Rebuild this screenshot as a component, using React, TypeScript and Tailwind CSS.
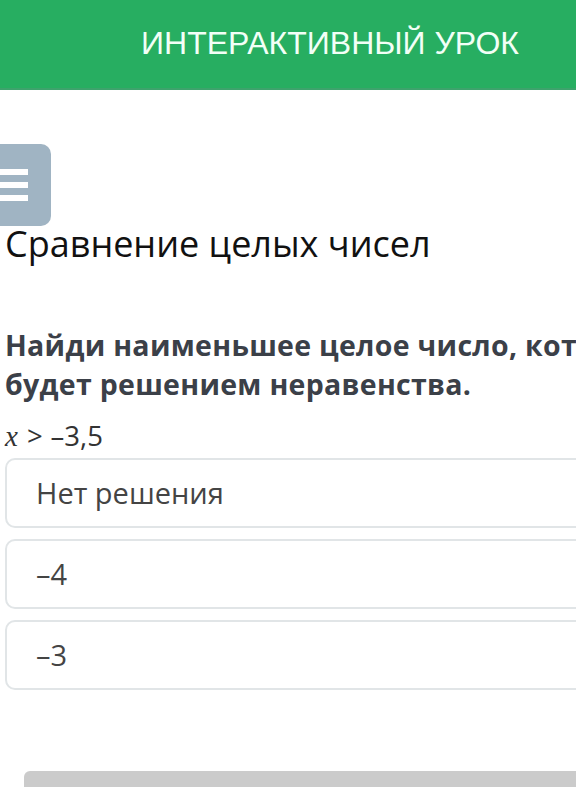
import React from 'react'

const options = ['Нет решения', '–4', '–3']

const MenuButton: React.FC = () => (
  <button
    type="button"
    className="flex h-[82px] w-[51px] flex-col justify-center gap-[7px] rounded-r-[10px] bg-[#a0b4c3]"
  >
    <span className="block h-[6px] w-[28px] bg-white" />
    <span className="block h-[6px] w-[28px] bg-white" />
    <span className="block h-[6px] w-[28px] bg-white" />
  </button>
)

export default function App() {
  return (
    <div className="h-[787px] w-[576px] overflow-hidden bg-white">
      <div className="w-[660px]">
        <header className="flex h-[90px] items-center justify-center border-b-2 border-[#3da36c] bg-[#27ae61] pb-[2px]">
          <h1 className="font-['Liberation_Sans',Arial,sans-serif] text-[32px] leading-none text-[#f2fff6]">
            ИНТЕРАКТИВНЫЙ УРОК
          </h1>
        </header>

        <div className="mt-[54px]">
          <MenuButton />
        </div>

        <div className="pl-[5px] font-['Open_Sans','Noto_Sans',sans-serif]">
          <h2 className="text-[36px] leading-[36px] text-[#111]">
            Сравнение целых чисел
          </h2>

          <p className="mt-[64px] text-[28.5px] font-bold leading-[39px] tracking-[0.3px] text-[#3b4048]">
            Найди наименьшее целое число, которое будет решением неравенства.
          </p>

          <div className="mt-[17px] flex items-baseline text-[27.5px] leading-[30px] text-[#333]">
            <span className="font-['Liberation_Serif',serif] text-[29px] italic">x</span>
            <span className="ml-[9px]">&gt;</span>
            <span className="ml-[8px]">–3,5</span>
          </div>

          <div className="mt-[7px] flex flex-col gap-[11px]">
            {options.map((option) => (
              <div
                key={option}
                className="flex h-[70px] items-center rounded-[10px] border-2 border-[#e1e5e7] pl-[29px] text-[29px] text-[#444]"
              >
                {option}
              </div>
            ))}
          </div>

          <div className="mt-[81px] ml-[19px] h-[40px] rounded-tl-[6px] bg-[#cbcbcb]" />
        </div>
      </div>
    </div>
  )
}
